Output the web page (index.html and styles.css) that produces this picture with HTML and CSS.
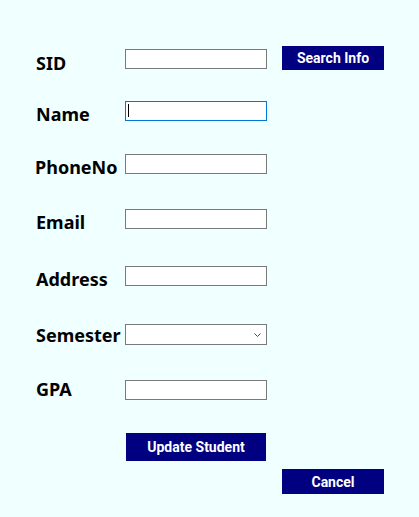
FILE: index.html
```html
<!DOCTYPE html>
<html lang="en">
<head>
<meta charset="utf-8">
<title>Update Student</title>
<link rel="stylesheet" href="styles.css">
</head>
<body>
<form class="form">
  <div class="row row-sid">
    <label class="label" for="sid">SID</label>
    <input class="textbox textbox-sid" id="sid" type="text">
    <button class="btn btn-search" type="button">Search Info</button>
  </div>
  <div class="row row-name">
    <label class="label" for="name">Name</label>
    <div class="field">
      <input class="textbox textbox-focused" id="name" type="text">
      <span class="caret"></span>
    </div>
  </div>
  <div class="row row-phone">
    <label class="label label-phone" for="phone">PhoneNo</label>
    <input class="textbox" id="phone" type="text">
  </div>
  <div class="row row-email">
    <label class="label" for="email">Email</label>
    <input class="textbox" id="email" type="text">
  </div>
  <div class="row row-address">
    <label class="label" for="address">Address</label>
    <input class="textbox" id="address" type="text">
  </div>
  <div class="row row-semester">
    <label class="label label-semester" for="semester">Semester</label>
    <div class="field">
      <select class="combo" id="semester"></select>
      <svg class="chevron" width="7" height="4" viewBox="0 0 7 4"><polyline points="0.5,0.5 3.5,3.5 6.5,0.5" fill="none" stroke="#4a4a4a" stroke-width="1"/></svg>
    </div>
  </div>
  <div class="row row-gpa">
    <label class="label label-gpa" for="gpa">GPA</label>
    <input class="textbox" id="gpa" type="text">
  </div>
  <div class="row row-update">
    <button class="btn btn-update" type="button">Update Student</button>
  </div>
  <div class="row row-cancel">
    <button class="btn btn-cancel" type="button">Cancel</button>
  </div>
</form>
</body>
</html>
```

FILE: styles.css
```css
html, body {
  margin: 0;
  padding: 0;
  background: #f0ffff;
}

.form {
  display: flex;
  flex-direction: column;
  padding-top: 46px;
}

.row {
  display: grid;
  grid-template-columns: 125px 142px 15px 102px;
  height: 20px;
}

.row-sid { height: 24px; }
.row-name { margin-top: 31px; }
.row-phone { margin-top: 33px; }
.row-email { margin-top: 35px; }
.row-address { margin-top: 37px; }
.row-semester { margin-top: 38px; height: 21px; }
.row-gpa { margin-top: 35px; }
.row-update { margin-top: 33px; height: 28px; }
.row-cancel { margin-top: 8px; height: 25px; }

.label {
  grid-column: 1;
  align-self: end;
  padding-left: 36px;
  font-family: "Noto Sans", sans-serif;
  font-weight: 700;
  font-size: 18px;
  line-height: 14px;
  color: #000;
  white-space: nowrap;
}

.label-phone { padding-left: 35px; }
.label-semester { margin-bottom: 3px; }
.label-gpa { margin-bottom: 4px; }

.textbox {
  grid-column: 2;
  box-sizing: border-box;
  width: 142px;
  height: 20px;
  margin: 0;
  padding: 0 3px;
  border: 1px solid #7a7a7a;
  border-radius: 0;
  background: #fff;
  outline: none;
  font: 12px "Liberation Sans", sans-serif;
}

.textbox-sid {
  align-self: start;
  margin-top: 3px;
}

.textbox-focused {
  border-color: #0078d7;
}

.field {
  grid-column: 2;
  position: relative;
  width: 142px;
}

.field .textbox {
  display: block;
}

.caret {
  position: absolute;
  left: 3px;
  top: 3px;
  width: 1px;
  height: 13px;
  background: #000;
}

.combo {
  display: block;
  box-sizing: border-box;
  width: 142px;
  height: 21px;
  margin: 0;
  border: 1px solid #7a7a7a;
  border-radius: 0;
  background: #fff;
  -webkit-appearance: none;
  appearance: none;
  outline: none;
}

.chevron {
  position: absolute;
  right: 6px;
  top: 9px;
}

.btn {
  box-sizing: border-box;
  margin: 0;
  padding: 0;
  border: none;
  border-radius: 0;
  background: #000080;
  color: #fff;
  font-family: Roboto, "Liberation Sans", sans-serif;
  font-weight: 700;
  font-size: 14px;
  line-height: 1;
  cursor: pointer;
}

.btn-search {
  grid-column: 4;
  height: 24px;
}

.btn-update {
  grid-column: 2;
  width: 140px;
  height: 28px;
  margin-left: 1px;
}

.btn-cancel {
  grid-column: 4;
  height: 25px;
}
```
